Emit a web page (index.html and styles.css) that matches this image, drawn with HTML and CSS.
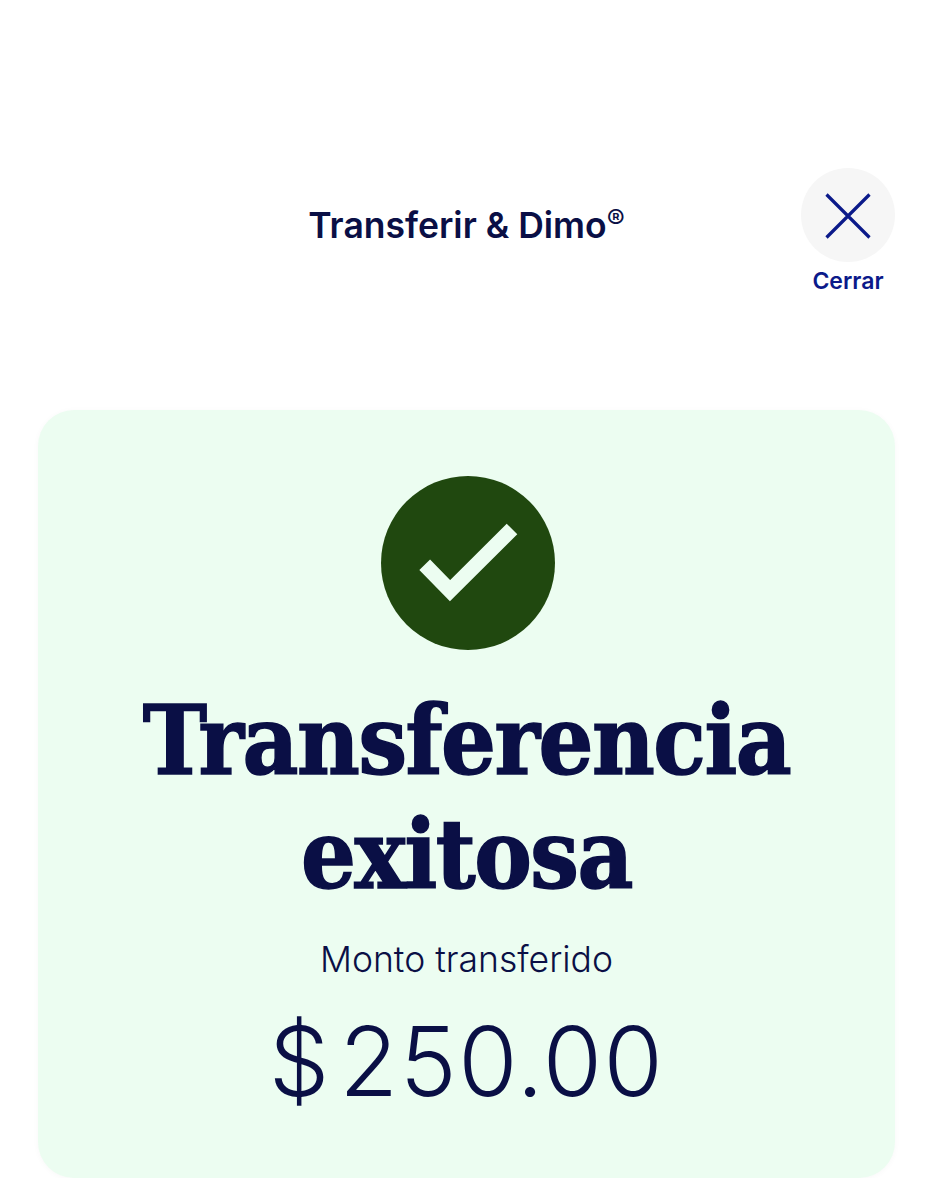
FILE: index.html
```html
<!DOCTYPE html>
<html lang="es">
<head>
<meta charset="utf-8" />
<title>Transferir &amp; Dimo</title>
<link rel="stylesheet" href="styles.css">
</head>
<body>

<header class="top">
	<h1 class="top-title">Transferir &amp; Dimo<sup>®</sup></h1>
	<div class="close">
		<span class="close-circle">
			<svg class="close-icon" width="46" height="46" viewBox="0 0 46 46" fill="none" stroke="#0b1a8a" stroke-width="3.200"><path d="M1.500 1.500 44.500 44.500M44.500 1.500 1.500 44.500"/></svg>
		</span>
		<span class="close-label">Cerrar</span>
	</div>
</header>

<main class="card">
	<svg class="check" width="174" height="174" viewBox="0 0 174 174">
		<circle cx="87" cy="87" r="87" fill="#20480f"/>
		<path d="M43.700 88.700 69 114.700 131 53" fill="none" stroke="#ecfdf1" stroke-width="15"/>
	</svg>
	<h2 class="headline">Transferencia exitosa</h2>
	<p class="amount-label">Monto transferido</p>
	<p class="amount">$<span class="amount-value">250.00</span></p>
</main>

</body>
</html>
```

FILE: styles.css
```css
body {
	margin: 0;
	background: #fff;
	color: #0a0f45;
	font-family: Inter, "Liberation Sans", sans-serif;
}

/* --------------------------------- */

.top {
	display: grid;
	grid-template-columns: 1fr auto 1fr;
	align-items: start;
	padding: 168px 39px 0 38px;
	height: 242px;
}
.top-title {
	grid-column: 2;
	margin: 38px 0 0;
	font-size: 35.500px;
	font-weight: 600;
	line-height: 40px;
	white-space: nowrap;
}
.top-title sup {
	font-size: 27px;
	font-weight: 400;
	line-height: 0;
	vertical-align: 9px;
}
.close {
	grid-column: 3;
	justify-self: end;
	display: flex;
	flex-direction: column;
	align-items: center;
	gap: 4px;
}
.close-circle {
	display: flex;
	align-items: center;
	justify-content: center;
	width: 94px;
	height: 94px;
	border-radius: 50%;
	background: #f6f6f6;
}
.close-icon {
	margin-top: 1px;
}
.close-label {
	color: #0b1a8a;
	font-size: 23px;
	font-weight: 600;
	line-height: 30px;
}

/* --------------------------------- */

.card {
	display: flex;
	flex-direction: column;
	align-items: center;
	box-sizing: border-box;
	height: 768px;
	margin: 0 39px 0 38px;
	padding-top: 66px;
	border-radius: 36px;
	background: #ecfdf1;
	box-shadow: 0 1px 6px rgba(0, 0, 0, 0.03);
	text-align: center;
}
.check {
	display: block;
	margin-left: 2px;
}
.headline {
	width: 760px;
	margin: 34px 0 0;
	font-family: "DejaVu Serif Condensed", "DejaVu Serif", serif;
	font-stretch: condensed;
	font-size: 96px;
	font-weight: 700;
	line-height: 114px;
	letter-spacing: -1.500px;
	-webkit-text-stroke: 1.500px #0a0f45;
}
.amount-label {
	margin: 26px 0 0;
	font-size: 35.500px;
	font-weight: 300;
	line-height: 44px;
}
.amount {
	margin: 24px 0 0;
	font-size: 96px;
	font-weight: 300;
	line-height: 110px;
}
.amount-value {
	margin-left: 10px;
	letter-spacing: 1.500px;
}
```
